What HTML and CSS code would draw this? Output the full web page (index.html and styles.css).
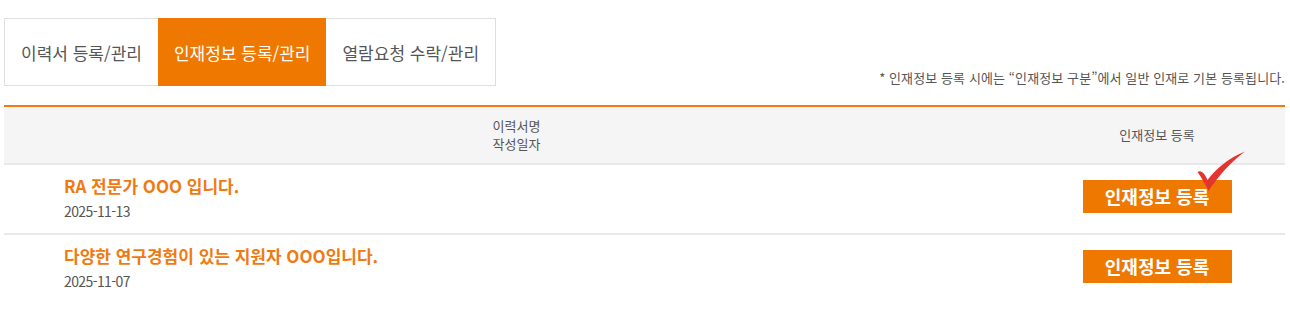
FILE: index.html
```html
<!DOCTYPE html>
<html lang="ko">
<head>
<meta charset="utf-8">
<title>인재정보 등록/관리</title>
<link rel="stylesheet" href="styles.css">
</head>
<body>
<div class="page">
  <div class="top">
    <ul class="tabs">
      <li class="tab">이력서 등록/관리</li>
      <li class="tab active">인재정보 등록/관리</li>
      <li class="tab">열람요청 수락/관리</li>
    </ul>
    <p class="note">* 인재정보 등록 시에는 “인재정보 구분”에서 일반 인재로 기본 등록됩니다.</p>
  </div>
  <div class="table">
    <div class="thead">
      <div class="th th-main">이력서명<br>작성일자</div>
      <div class="th th-side">인재정보 등록</div>
    </div>
    <div class="row">
      <div class="cell-main">
        <div class="title">RA 전문가 OOO 입니다.</div>
        <div class="date">2025-11-13</div>
      </div>
      <div class="cell-side">
        <span class="btn-wrap">
          <button class="btn" type="button">인재정보 등록</button>
          <svg class="check" viewBox="0 0 50 42" width="50" height="42" aria-hidden="true">
            <path d="M1.5,22 C5,19.5 9,23.5 11.5,30 C19,20 32,8 49,1.5 C36,11 23,25 12.5,41 C9,34 5.5,27.5 1.5,22 Z" fill="#e3342f"/>
          </svg>
        </span>
      </div>
    </div>
    <div class="row">
      <div class="cell-main">
        <div class="title">다양한 연구경험이 있는 지원자 OOO입니다.</div>
        <div class="date">2025-11-07</div>
      </div>
      <div class="cell-side">
        <span class="btn-wrap">
          <button class="btn" type="button">인재정보 등록</button>
        </span>
      </div>
    </div>
  </div>
</div>
</body>
</html>
```

FILE: styles.css
```css
* { box-sizing: border-box; }
html, body { margin: 0; padding: 0; background: #fff; }
body {
  font-family: "Noto Sans CJK KR", "Noto Sans", sans-serif;
  color: #555;
}
.page { padding: 18px 5px 0 4px; }

.top {
  display: flex;
  justify-content: space-between;
  align-items: flex-end;
  margin-bottom: 19px;
}
.tabs {
  display: flex;
  list-style: none;
  margin: 0;
  padding: 0;
  border: 1px solid #dedede;
}
.tab {
  height: 66px;
  padding: 0 16px;
  display: flex;
  align-items: center;
  font-size: 17px;
  font-weight: 400;
  color: #555;
  white-space: nowrap;
}
.tab.active {
  background: #ef7800;
  color: #fff;
  height: 68px;
  margin: -1px 0;
}
.note {
  margin: 0;
  font-size: 13px;
  line-height: 18px;
  letter-spacing: 0.1px;
  color: #555;
  position: relative;
  top: 1px;
}

.table { border-top: 2px solid #f37a12; }
.thead {
  display: grid;
  grid-template-columns: 1fr 256px;
  background: #f5f5f5;
  border-bottom: 2px solid #e9e9e9;
}
.th {
  padding: 10px 0;
  text-align: center;
  font-size: 13px;
  line-height: 18px;
  color: #555;
  display: flex;
  align-items: center;
  justify-content: center;
}
.row {
  display: grid;
  grid-template-columns: 1fr 256px;
  height: 70px;
  border-bottom: 2px solid #e9e9e9;
}
.row:last-child { border-bottom: none; }
.cell-main { padding: 8px 0 0 60px; }
.title {
  font-size: 17px;
  font-weight: 700;
  line-height: 26px;
  color: #f07a12;
}
.date {
  font-size: 14px;
  line-height: 24px;
  color: #555;
  letter-spacing: -0.6px;
}
.cell-side {
  display: flex;
  justify-content: center;
  align-items: flex-start;
  padding-top: 15px;
}
.btn-wrap { position: relative; display: inline-block; }
.btn {
  display: block;
  width: 149px;
  height: 33px;
  border: 0;
  padding: 0;
  background: #ef7800;
  color: #fff;
  font-family: "Noto Sans CJK KR", "Noto Sans", sans-serif;
  font-size: 18px;
  font-weight: 700;
  line-height: 33px;
  cursor: pointer;
}
.check {
  position: absolute;
  left: 113px;
  top: -30px;
}
```
